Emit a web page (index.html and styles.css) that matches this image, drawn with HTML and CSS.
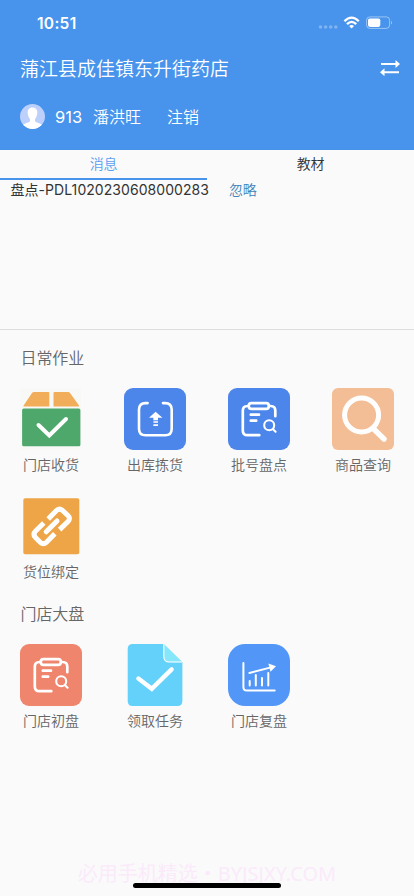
FILE: index.html
```html
<!DOCTYPE html>
<html lang="zh-CN">
<head>
<meta charset="utf-8">
<meta name="viewport" content="width=device-width, initial-scale=1">
<title>门店作业</title>
<link rel="stylesheet" href="styles.css">
</head>
<body>
<svg class="defs" width="0" height="0">
  <symbol id="clipboard" viewBox="0 0 62 62">
    <g fill="none" stroke="#fff" stroke-width="2.7" stroke-linecap="round" stroke-linejoin="round">
      <rect x="20.8" y="15.2" width="20" height="5.6" rx="2.6"/>
      <path d="M20.5 18H19.5Q14.8 18 14.8 22.7V42.5Q14.8 47.2 19.5 47.2H31.3M41 18H42.6Q47.3 18 47.3 22.7V28.2"/>
      <path d="M22.8 26.7H31M22.8 32.7H28.2"/>
      <g stroke-width="2.1"><circle cx="41.2" cy="37.3" r="5"/><path d="M45 41.2L47.6 43.8"/></g>
    </g>
  </symbol>
</svg>
<header class="header">
  <div class="status">
    <span class="time">10:51</span>
    <svg class="signals" width="76" height="16" viewBox="0 0 76 16">
      <g fill="#fff" opacity=".3"><circle cx="2.5" cy="12" r="1.8"/><circle cx="7.6" cy="12" r="1.8"/><circle cx="12.7" cy="12" r="1.8"/><circle cx="17.8" cy="12" r="1.8"/></g>
      <g fill="none" stroke="#fff" stroke-width="2.3"><path d="M26.4 6.2Q33.6-1 40.8 6.2"/><path d="M29 9.1Q33.6 4.6 38.2 9.1"/></g>
      <path d="M31.2 11Q33.6 9 36 11L33.6 13.6Z" fill="#fff"/>
      <rect x="48.6" y="1.9" width="23" height="11.5" rx="3.3" fill="none" stroke="#fff" stroke-opacity=".45"/>
      <rect x="50" y="3.5" width="12.3" height="8.4" rx="1.8" fill="#fff"/>
      <path d="M73 5.6Q74.8 7.6 73 9.6Z" fill="#fff" opacity=".5"/>
    </svg>
  </div>
  <div class="store">
    <h1>蒲江县成佳镇东升街药店</h1>
    <svg width="20" height="16" viewBox="0 0 20 16"><path d="M1 4H16M4 12.2H19" stroke="#fff" stroke-width="2"/><path d="M15.5 0L20 4L15.5 8ZM4.5 8.2L0 12.2L4.5 16.2Z" fill="#fff"/></svg>
  </div>
  <div class="user">
    <svg class="avatar" width="25" height="25" viewBox="0 0 25 25"><defs><clipPath id="face"><circle cx="12.5" cy="12.5" r="12.5"/></clipPath></defs><g clip-path="url(#face)"><path d="M0 0H25V25H0Z" fill="#bdd0fb"/><path d="M12.5 3.6C9.2 3.6 7.4 6 7.7 9.1C7.9 12 8.8 13.8 10 15V17C9.4 19 4 18.8 2.5 21.4V25H22.5V21.4C21 18.8 15.6 19 15 17V15C16.2 13.8 17.1 12 17.3 9.1C17.6 6 15.8 3.6 12.5 3.6Z" fill="#fff"/></g></svg>
    <span class="num">913</span><span class="name">潘洪旺</span><span>注销</span>
  </div>
</header>
<nav class="tabs"><span class="tab active">消息</span><span class="tab">教材</span></nav>
<section class="messages">
  <div class="message"><span class="order">盘点-PDL1020230608000283</span><span class="ignore">忽略</span></div>
</section>
<main>
  <h2>日常作业</h2>
  <div class="grid daily">
    <div class="item">
      <svg viewBox="0 0 62 62"><path d="M0 0H61V62H0Z" fill="#f8f8f7"/><path d="M14 4H28.3Q29.3 4 29.3 5V18.5H4Q3 18.5 3.6 17.6L12 5Q12.7 4 14 4ZM34.5 4H48Q49.3 4 50 5L59 17.6Q59.5 18.5 58.6 18.5H33.5V5Q33.5 4 34.5 4Z" fill="#f1ad59"/><rect x="2.1" y="20.6" width="58.3" height="37.6" rx="1.5" fill="#4fa86b"/><path d="M18.5 37L29.3 47.4L46 31" fill="none" stroke="#fff" stroke-width="4" stroke-linecap="round"/></svg>
      <span>门店收货</span>
    </div>
    <div class="item">
      <svg viewBox="0 0 62 62"><rect width="62" height="62" rx="9" fill="#4c86eb"/><path d="M23.6 15.1H21.5Q15 15.1 15 21.6V40.8Q15 47.3 21.5 47.3H41.2Q47.7 47.3 47.7 40.8V21.6Q47.7 15.1 41.2 15.1H39" fill="none" stroke="#fff" stroke-width="2.6" stroke-linecap="round"/><path d="M31.6 23.8L38.4 29.8H34V32.2H29.4V29.8H25ZM29.4 33.2H34V34.7H29.4ZM29.4 36.2H34V38H29.4Z" fill="#fff"/></svg>
      <span>出库拣货</span>
    </div>
    <div class="item">
      <svg viewBox="0 0 62 62"><rect width="62" height="62" rx="9" fill="#4c86eb"/><use href="#clipboard"/></svg>
      <span>批号盘点</span>
    </div>
    <div class="item">
      <svg viewBox="0 0 62 62"><rect width="62" height="62" rx="6" fill="#f3bd95"/><circle cx="29.6" cy="27" r="17" fill="none" stroke="#fff" stroke-width="5"/><path d="M41.5 40.8L52 51" stroke="#fff" stroke-width="5.4" stroke-linecap="round"/></svg>
      <span>商品查询</span>
    </div>
    <div class="item">
      <svg viewBox="0 0 62 62"><rect x="3.3" y="3.2" width="56" height="56" rx="1.8" fill="#eea547"/><g fill="none" stroke="#fff" stroke-width="5"><path d="M28.2 24L36.2 15.8Q39.2 12.6 42.4 15.4L47.8 20.3Q51 23.3 48 26.5L39.6 34.6"/><path d="M23.8 28L15.4 36.2Q12.4 39.2 15.5 42.5L20.2 47.2Q23.4 50.2 26.5 47.2L34.8 38.8"/><path d="M26.2 36.8L37 26" stroke-linecap="round"/></g></svg>
      <span>货位绑定</span>
    </div>
  </div>
  <h2 class="second">门店大盘</h2>
  <div class="grid">
    <div class="item">
      <svg viewBox="0 0 62 62"><rect width="62" height="62" rx="9" fill="#ee856c"/><use href="#clipboard"/></svg>
      <span>门店初盘</span>
    </div>
    <div class="item">
      <svg viewBox="0 0 62 62"><path d="M8.7 0H39.6L58.4 18.5V57Q58.4 62 53.4 62H8.7Q3.7 62 3.7 57V5Q3.7 0 8.7 0Z" fill="#64d1fa"/><path d="M39.8 0L58.4 18.2H45.6Q39.8 18.2 39.8 12.4Z" fill="#86e7fb"/><path d="M39.8 0V12.2Q39.8 18 45.6 18H58" fill="none" stroke="#fff" stroke-width="1.1"/><path d="M14.4 34.6L27.8 44.8L47.6 25.4" fill="none" stroke="#fff" stroke-width="4.4" stroke-linecap="round"/></svg>
      <span>领取任务</span>
    </div>
    <div class="item">
      <svg viewBox="0 0 62 62"><rect width="62" height="62" rx="17" fill="#5297f8"/><g fill="none" stroke="#fff" stroke-width="2" stroke-linecap="round"><path d="M15.4 19V43Q15.4 46.6 19 46.6H46.7"/><path d="M21.7 37V41.5M27.8 31V41.5M34 34V41.5M40.3 29V41.5M21.4 29L42 23.6"/></g><path d="M40.4 19.4L48 22.2L42.5 27.8Z" fill="#fff"/></svg>
      <span>门店复盘</span>
    </div>
  </div>
</main>
<footer class="footer"><span class="watermark">必用手机精选・<span class="site">BYJSJXY.COM</span></span><i class="home"></i></footer>
</body>
</html>
```
FILE: styles.css
```css
* { box-sizing: border-box; }
body {
  margin: 0;
  height: 896px;
  display: flex;
  flex-direction: column;
  overflow: hidden;
  background: #fafafa;
  color: #666;
  font-family: Inter, "Noto Sans CJK SC", sans-serif;
  font-weight: 360;
}
svg { display: block; flex: none; }
.defs { position: absolute; }
h1, h2 { margin: 0; font-weight: 360; }
.header { height: 150px; background: #4893eb; color: #fff; }
.status { height: 46px; padding: 0 20px 0 37px; display: flex; justify-content: space-between; align-items: center; }
.time { font-size: 15.5px; font-weight: 600; letter-spacing: .3px; }
.store { height: 44px; padding: 0 14px 0 20px; display: flex; align-items: center; justify-content: space-between; }
.store h1 { padding-top: 3px; font-size: 19px; line-height: 44px; }
.user { height: 52px; padding-left: 20px; display: flex; align-items: center; font-size: 16px; }
.num { margin-left: 10px; padding-top: 2px; width: 38px; font-size: 16.5px; font-weight: 400; }
.name { width: 74px; }
.tabs { height: 30px; display: flex; font-size: 14px; line-height: 28px; color: #333; }
.tab { width: 50%; text-align: center; border-bottom: 2px solid transparent; letter-spacing: -.2px; }
.active { color: #5b9ff0; border-color: #4893eb; }
.messages { height: 150px; border-bottom: 1px solid #ddd; }
.message { padding-left: 10.5px; display: flex; font-size: 14px; line-height: 20px; color: #333; }
.order { width: 218.5px; white-space: nowrap; letter-spacing: .06px; font-weight: 400; }
.ignore { color: #3f83b8; letter-spacing: -.2px; }
h2 { padding-left: 20.5px; height: 58px; line-height: 56px; font-size: 16px; letter-spacing: -.1px; }
.second { height: 49px; line-height: 38px; }
.grid { display: grid; grid-template-columns: repeat(4, 104px); margin-left: -1px; }
.daily { grid-template-rows: 107px 100px; }
.item { display: flex; flex-direction: column; align-items: center; font-size: 14px; line-height: 20px; }
.item svg { width: 62px; height: 62px; }
.item span { margin-top: 5px; }
.footer { margin-top: auto; height: 36px; position: relative; display: flex; justify-content: center; }
.watermark { font-size: 20px; font-weight: 400; line-height: 28px; color: #fbeafa; white-space: nowrap; }
.site { font-family: "Noto Sans", sans-serif; }
.home { position: absolute; left: 133px; bottom: 8px; width: 148px; height: 5px; border-radius: 3px; background: #000; }
```
